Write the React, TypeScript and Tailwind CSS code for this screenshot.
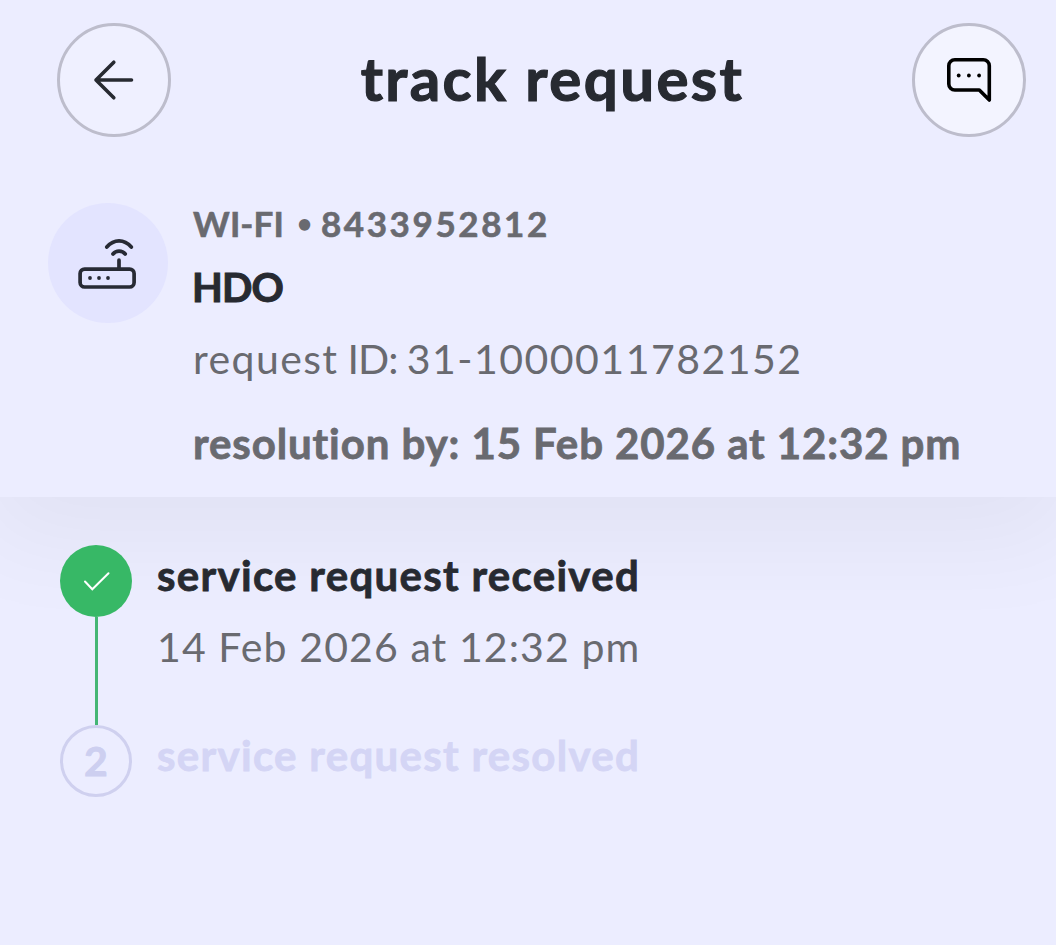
import type { ReactNode } from "react";

function RoundButton({ label, className, children }: { label: string; className: string; children: ReactNode }) {
    return (
        <button
            aria-label={label}
            className={`flex h-[114px] w-[114px] shrink-0 items-center justify-center rounded-full border-[3px] border-[#bdbdcc] ${className}`}
        >
            {children}
        </button>
    );
}

function BackIcon() {
    return (
        <svg width="72" height="72" viewBox="0 0 72 72" fill="none" stroke="#272a31" strokeWidth="3.6" strokeLinecap="round" strokeLinejoin="round">
            <path d="M53.500 36H18M35.800 18.200 18 36l17.800 17.800" />
        </svg>
    );
}

function ChatIcon() {
    return (
        <svg width="72" height="72" viewBox="0 0 72 72" fill="none" stroke="#000" strokeWidth="3.6" strokeLinecap="round" strokeLinejoin="round">
            <path d="M56.300 56V21.800a6 6 0 0 0-6-6H21.800a6 6 0 0 0-6 6V40a6 6 0 0 0 6 6H46.300z" />
            <g fill="#000" stroke="none">
                <circle cx="25.700" cy="31.500" r="1.9" />
                <circle cx="35.900" cy="31.500" r="1.9" />
                <circle cx="46.100" cy="31.500" r="1.9" />
            </g>
        </svg>
    );
}

function RouterIcon() {
    return (
        <svg width="72" height="72" viewBox="0 0 72 72" fill="none" stroke="#272a34" strokeWidth="3.7" strokeLinecap="round" strokeLinejoin="round">
            <rect x="8.100" y="42.100" width="54" height="17.900" rx="4.500" />
            <path d="M47 42v-8.800M34.800 20c7.200-8.200 17.300-8.200 24.500 0M41 27c3-3.900 9.200-3.900 12.200 0" />
            <g fill="#272a34" stroke="none">
                <circle cx="18" cy="51" r="1.9" />
                <circle cx="27" cy="51" r="1.9" />
                <circle cx="36" cy="51" r="1.9" />
            </g>
        </svg>
    );
}

export default function App() {
    return (
        <main className="min-h-[945px] overflow-hidden bg-[#ecedff] font-['Lato',sans-serif] text-[41px] leading-[60px] whitespace-nowrap text-[#272a31]">
            <section className="h-[497px] bg-[#ecedff] pt-[23px] shadow-[0_28px_96px_16px_rgba(0,0,0,0.046)]">
                <div className="flex items-center justify-between pr-[30px] pl-[57px]">
                    <RoundButton label="back" className="bg-[#eff0ff]">
                        <BackIcon />
                    </RoundButton>
                    <h1 className="pb-[5px] pl-[22px] text-[60px] leading-[72px] font-bold tracking-[2.4px] [-webkit-text-stroke:1.2px]">
                        track request
                    </h1>
                    <RoundButton label="chat" className="bg-[#f3f4ff]">
                        <ChatIcon />
                    </RoundButton>
                </div>

                <div className="mt-[62px] flex gap-6 pl-12">
                    <div className="mt-1 flex h-[120px] w-[120px] shrink-0 items-center justify-center rounded-full bg-[#e3e4ff]">
                        <RouterIcon />
                    </div>
                    <div className="pl-px text-[#696a70]">
                        <p className="flex items-center text-[35px] leading-[48px] font-bold">
                            <span className="tracking-[0.1px] [-webkit-text-stroke:0.6px]">WI-FI</span>
                            <span className="mx-[13px] w-[11px] text-center text-[26px]">•</span>
                            <span className="tracking-[2.6px] [-webkit-text-stroke:0.6px]">8433952812</span>
                        </p>
                        <h2 className="mt-[10px] -ml-px text-[40px] font-bold tracking-[-0.9px] text-[#272a31] [-webkit-text-stroke:1px]">
                            HDO
                        </h2>
                        <p className="mt-3 flex">
                            <span className="tracking-[1.4px]">request</span>
                            <span className="ml-[9px] tracking-[-0.9px]">ID:</span>
                            <span className="ml-[9px] tracking-[1.5px]">31-1000011782152</span>
                        </p>
                        <p className="mt-6 text-[42px] font-bold tracking-[0.9px] [-webkit-text-stroke:0.8px]">
                            resolution by: 15 Feb 2026 at 12:32 pm
                        </p>
                    </div>
                </div>
            </section>

            <ol className="relative pt-12 pl-[60px]">
                <li className="flex gap-6">
                    <div className="flex w-[72px] shrink-0 flex-col items-center">
                        <div className="flex h-[72px] w-[72px] items-center justify-center rounded-full bg-[#37b866]">
                            <svg width="36" height="36" viewBox="0 0 36 36" fill="none" stroke="#fff" strokeWidth="2" strokeLinecap="round">
                                <path d="m7 18.500 7.300 7.800L30.500 10.300" />
                            </svg>
                        </div>
                        <div className="h-[108px] w-[3px] bg-[#45b675]" />
                    </div>
                    <div>
                        <h3 className="pl-px text-[42px] font-bold tracking-[1.3px] [-webkit-text-stroke:0.8px]">service request received</h3>
                        <p className="mt-3 pl-px tracking-[1.1px] text-[#696a70]">14 Feb 2026 at 12:32 pm</p>
                    </div>
                </li>
                <li className="flex gap-6 font-bold text-[#d4d5f5]">
                    <div className="flex h-[72px] w-[72px] shrink-0 items-center justify-center rounded-full border-[3px] border-[#cfd0ef]">
                        <span className="text-[#cdcff0] [-webkit-text-stroke:0.8px]">2</span>
                    </div>
                    <h3 className="pl-px text-[42px] tracking-[1.3px] [-webkit-text-stroke:0.8px]">service request resolved</h3>
                </li>
            </ol>
        </main>
    );
}
